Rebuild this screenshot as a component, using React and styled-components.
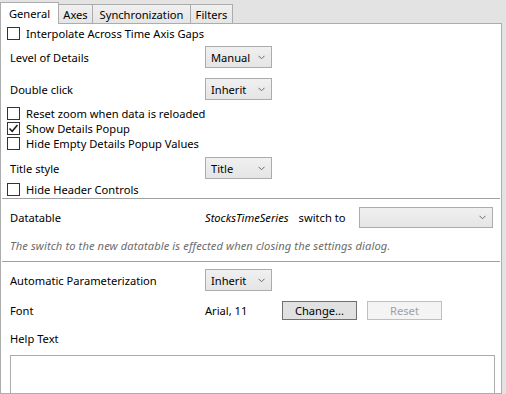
import React from 'react';
import styled, { createGlobalStyle } from 'styled-components';

const Global = createGlobalStyle`
    html, body {
        margin: 0;
        padding: 0;
        background: #e3e3e3;
    }
    body {
        font-family: "Noto Sans", "DejaVu Sans", sans-serif;
        font-size: 11.15px;
        color: #000;
    }
`

const Window = styled.div`
    width: 506px;
    height: 394px;
    overflow: hidden;
    display: flex;
    flex-direction: column;
    background: #e3e3e3;
`
const TabStrip = styled.div`
    display: flex;
    align-items: flex-end;
    height: 23px;
    flex-shrink: 0;
`
const Tab = styled.div`
    box-sizing: border-box;
    display: flex;
    align-items: center;
    justify-content: center;
    border: 1px solid #acacac;
    border-bottom: 0;
    height: ${p => p.$active ? '22px' : '19px'};
    width: ${p => p.$w}px;
    margin-left: -1px;
    margin-bottom: ${p => p.$active ? '-1px' : '0'};
    position: relative;
    z-index: ${p => p.$active ? 2 : 1};
    background: ${p => p.$active ? '#fff' : 'linear-gradient(#f0f0f0, #e5e5e5)'};
    padding-top: ${p => p.$active ? '0' : '1px'};
    white-space: nowrap;
    &:first-child { margin-left: 0; }
`
const Panel = styled.div`
    flex: 1;
    min-height: 0;
    overflow: hidden;
    margin-right: 4px;
    background: #fff;
    border: 1px solid #acacac;
    padding: 0 6px;
    display: flex;
    flex-direction: column;
`
const CheckRow = styled.label`
    display: flex;
    align-items: center;
    flex-shrink: 0;
    height: 15px;
    margin-top: ${p => p.$top || 0}px;
    white-space: nowrap;
`
const Box = styled.span`
    box-sizing: border-box;
    width: 13px;
    height: 13px;
    border: 1px solid #333;
    background: #fff;
    margin-right: 6px;
    display: flex;
    align-items: center;
    justify-content: center;
`
const Row = styled.div`
    display: grid;
    grid-template-columns: 198px auto;
    align-items: center;
    flex-shrink: 0;
    height: ${p => p.$h || 22}px;
    margin-top: ${p => p.$top || 0}px;
    white-space: nowrap;
`
const Label = styled.span`
    padding-left: 3px;
`
const Combo = styled.div`
    box-sizing: border-box;
    width: ${p => p.$w || 67}px;
    height: ${p => p.$h || 22}px;
    border: 1px solid #acacac;
    background: linear-gradient(#f0f0f0, #e5e5e5);
    display: flex;
    align-items: center;
    justify-content: space-between;
    padding: 0 6px 0 5px;
`
const Chevron = () => (
    <svg width="7" height="5" viewBox="0 0 7 5">
        <path d="M0.5 0.8 L3.5 3.8 L6.5 0.8" fill="none" stroke="#6a6a6a" strokeWidth="1" />
    </svg>
)
const Inline = styled.div`
    display: flex;
    align-items: center;
`
const Italic = styled.span`
    font-style: italic;
    margin-right: 10px;
`
const SwitchLabel = styled.span`
    margin-right: 13px;
`
const Separator = styled.div`
    height: 1px;
    flex-shrink: 0;
    background: #a0a0a0;
    margin: ${p => p.$top}px -5px 0 -5px;
`
const Hint = styled.div`
    font-style: italic;
    color: #6d6d6d;
    padding-left: 3px;
    height: 15px;
    line-height: 15px;
    letter-spacing: 0.1px;
    flex-shrink: 0;
    margin-top: ${p => p.$top}px;
    white-space: nowrap;
`
const Value = styled.span`
    width: 77px;
`
const Button = styled.div`
    box-sizing: border-box;
    width: 75px;
    height: 19px;
    display: flex;
    align-items: center;
    justify-content: center;
    margin-right: 10px;
    border: 1px solid ${p => p.$disabled ? '#bfbfbf' : '#707070'};
    background: ${p => p.$disabled ? '#f4f4f4' : '#e1e1e1'};
    color: ${p => p.$disabled ? '#a0a0a0' : '#000'};
`
const TextArea = styled.div`
    box-sizing: border-box;
    flex-shrink: 0;
    margin: ${p => p.$top}px 0 0 3px;
    width: 485px;
    height: 60px;
    border: 1px solid #ababab;
    background: #fff;
`

const Check = ({ checked, top, children }) => (
    <CheckRow $top={top}>
        <Box>
            {checked && (
                <svg width="11" height="11" viewBox="0 0 11 11">
                    <path d="M1.5 5.5 L4.2 8.3 L9.5 2" fill="none" stroke="#1a1a1a" strokeWidth="1.5" />
                </svg>
            )}
        </Box>
        {children}
    </CheckRow>
)

const Select = ({ value, w, h }) => (
    <Combo $w={w} $h={h}>
        <span>{value}</span>
        <Chevron />
    </Combo>
)

const App = () => {
    return (
        <Window>
            <Global />
            <TabStrip>
                <Tab $active $w={59}>General</Tab>
                <Tab $w={35}>Axes</Tab>
                <Tab $w={99}>Synchronization</Tab>
                <Tab $w={43}>Filters</Tab>
            </TabStrip>
            <Panel>
                <Check top={2}>Interpolate Across Time Axis Gaps</Check>
                <Row $top={5}>
                    <Label>Level of Details</Label>
                    <Select value="Manual" />
                </Row>
                <Row $top={10}>
                    <Label>Double click</Label>
                    <Select value="Inherit" />
                </Row>
                <Check top={6}>Reset zoom when data is reloaded</Check>
                <Check checked>Show Details Popup</Check>
                <Check>Hide Empty Details Popup Values</Check>
                <Row $top={6}>
                    <Label>Title style</Label>
                    <Select value="Title" />
                </Row>
                <Check top={3}>Hide Header Controls</Check>
                <Separator $top={1} />
                <Row $top={8} $h={21}>
                    <Label>Datatable</Label>
                    <Inline>
                        <Italic>StocksTimeSeries</Italic>
                        <SwitchLabel>switch to</SwitchLabel>
                        <Select value="" w={134} h={21} />
                    </Inline>
                </Row>
                <Hint $top={10}>The switch to the new datatable is effected when closing the settings dialog.</Hint>
                <Separator $top={8} />
                <Row $top={7}>
                    <Label>Automatic Parameterization</Label>
                    <Select value="Inherit" />
                </Row>
                <Row $top={9} $h={20}>
                    <Label>Font</Label>
                    <Inline>
                        <Value>Arial, 11</Value>
                        <Button>Change...</Button>
                        <Button $disabled>Reset</Button>
                    </Inline>
                </Row>
                <Row $top={11} $h={15}>
                    <Label>Help Text</Label>
                </Row>
                <TextArea $top={9} />
            </Panel>
        </Window>
    )
}

export default App
